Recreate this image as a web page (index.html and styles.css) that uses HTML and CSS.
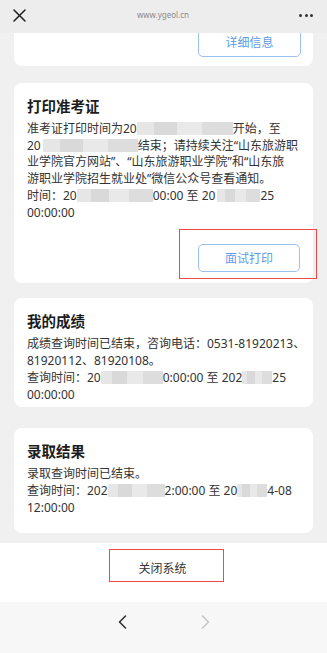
FILE: index.html
```html
<!DOCTYPE html>
<html lang="zh-CN">
<head>
<meta charset="utf-8">
<title>ygeol</title>
<link rel="stylesheet" href="styles.css">
</head>
<body>
<div class="page">
  <header class="topbar">
    <svg class="close" width="13" height="13" viewBox="0 0 13 13"><path d="M1 1L12 12M12 1L1 12" stroke="#1f1f1f" stroke-width="1.5" stroke-linecap="round"/></svg>
    <div class="url">www.ygeol.cn</div>
    <div class="dots"><i></i><i></i><i></i></div>
  </header>
  <main class="content">
    <section class="card card-top">
      <button class="btn btn-detail">详细信息</button>
    </section>
    <section class="card card-print">
      <h2 class="title">打印准考证</h2>
      <div class="text text-print">
        <div class="line">准考证打印时间为20<span class="mask m-a"></span>开始，至</div>
        <div class="line">20<span class="mask m-b"></span>结束；请持续关注“山东旅游职</div>
        <div class="line">业学院官方网站”、“山东旅游职业学院”和“山东旅</div>
        <div class="line">游职业学院招生就业处”微信公众号查看通知。</div>
        <div class="line">时间：20<span class="mask m-c"></span>00:00 至 20<span class="mask m-d"></span>25</div>
        <div class="line">00:00:00</div>
      </div>
      <div class="mark">
        <button class="btn btn-print">面试打印</button>
      </div>
    </section>
    <section class="card card-score">
      <h2 class="title">我的成绩</h2>
      <div class="text text-score">
        <div class="line">成绩查询时间已结束，咨询电话：0531-81920213、</div>
        <div class="line">81920112、81920108。</div>
        <div class="line">查询时间：20<span class="mask m-e"></span>0:00:00 至 202<span class="mask m-f"></span>25</div>
        <div class="line">00:00:00</div>
      </div>
    </section>
    <section class="card card-admit">
      <h2 class="title">录取结果</h2>
      <div class="text text-admit">
        <div class="line">录取查询时间已结束。</div>
        <div class="line">查询时间：202<span class="mask m-g"></span>2:00:00 至 20<span class="mask m-h"></span>4-08</div>
        <div class="line">12:00:00</div>
      </div>
    </section>
  </main>
  <div class="footer">
    <div class="close-sys">关闭系统</div>
  </div>
  <nav class="bottombar">
    <svg width="9" height="14" viewBox="0 0 9 14"><path d="M7.5 1L1.5 7L7.5 13" fill="none" stroke="#2b2b2b" stroke-width="1.5" stroke-linecap="round" stroke-linejoin="round"/></svg>
    <svg width="9" height="14" viewBox="0 0 9 14"><path d="M1.5 1L7.5 7L1.5 13" fill="none" stroke="#c4c4c4" stroke-width="1.5" stroke-linecap="round" stroke-linejoin="round"/></svg>
  </nav>
</div>
</body>
</html>
```
FILE: styles.css
```css
html, body {
  margin: 0;
  padding: 0;
}
body {
  width: 327px;
  height: 653px;
  overflow: hidden;
  font-family: "Noto Sans", "Noto Sans CJK SC", sans-serif;
  color: #333;
}
.page {
  display: flex;
  flex-direction: column;
  width: 327px;
  height: 653px;
}
.topbar {
  height: 33px;
  flex-shrink: 0;
  box-sizing: border-box;
  background: #ededed;
  display: grid;
  grid-template-columns: 1fr auto 1fr;
  align-items: start;
  padding: 0 14px 0 13px;
}
.close {
  margin-top: 9px;
}
.url {
  margin-top: 10px;
  font-size: 8px;
  line-height: 10px;
  color: #8a8a8a;
}
.dots {
  justify-self: end;
  display: flex;
  gap: 2.5px;
  margin-top: 14px;
}
.dots i {
  display: block;
  width: 3px;
  height: 3px;
  border-radius: 50%;
  background: #333;
}
.content {
  height: 510px;
  flex-shrink: 0;
  box-sizing: border-box;
  overflow: hidden;
  background: #f0f0f0;
  padding: 0 14px;
  display: flex;
  flex-direction: column;
}
.card {
  flex-shrink: 0;
  background: #fff;
  border-radius: 8px;
  box-sizing: border-box;
}
.card-top {
  margin-top: -6px;
  padding: 0 12px 9px;
  display: flex;
  justify-content: flex-end;
}
.btn {
  display: block;
  box-sizing: border-box;
  border: 1px solid #9cc1f0;
  border-radius: 5px;
  background: #fff;
  color: #5e9ce8;
  font-family: "Noto Sans", "Noto Sans CJK SC", sans-serif;
  font-size: 12px;
  padding: 0;
  margin: 0;
}
.btn-detail {
  width: 103px;
  height: 30px;
}
.btn-print {
  width: 102px;
  height: 28px;
}
.card-print {
  margin-top: 17px;
  padding: 13px 13px 4px;
  display: flex;
  flex-direction: column;
}
.title {
  margin: 0;
  font-size: 14.5px;
  line-height: 20px;
  font-weight: 700;
  color: #1c1c1c;
}
.text {
  font-size: 12px;
  color: #333;
}
.text-print {
  margin-top: 5px;
  line-height: 16.7px;
}
.text-score {
  margin-top: 4px;
  line-height: 17px;
}
.text-admit {
  margin-top: 5px;
  line-height: 16.7px;
}
.line {
  white-space: nowrap;
}
.mask {
  display: inline-block;
  height: 13px;
  vertical-align: -2px;
  background: linear-gradient(90deg, #e6e6e6 0 18%, #d9d9d9 18% 42%, #e9e9e9 42% 68%, #dddddd 68% 100%);
}
.m-a { width: 96px; }
.m-b { width: 95px; margin-left: 2px; }
.m-c { width: 76px; }
.m-d { width: 43px; margin-left: 2px; }
.m-e { width: 62px; }
.m-f { width: 30px; }
.m-g { width: 57px; }
.m-h { width: 30px; }
.mark {
  align-self: flex-end;
  margin: 8px -17px 0 0;
  border: 1px solid #f04848;
  padding: 14px 16px 6px 18px;
}
.card-score {
  margin-top: 15px;
  padding: 13px 13px 4px;
}
.card-admit {
  margin-top: 21px;
  padding: 13px 13px 17px;
}
.footer {
  height: 59px;
  flex-shrink: 0;
  background: #fff;
  display: flex;
  justify-content: center;
  align-items: flex-start;
}
.close-sys {
  margin-top: 6px;
  margin-left: 6px;
  box-sizing: border-box;
  height: 33px;
  border: 1px solid #f04848;
  padding: 10px 36px 4px 28px;
  font-size: 12px;
  line-height: 17px;
  color: #333;
}
.bottombar {
  flex: 1;
  background: #f7f7f7;
  display: flex;
  justify-content: center;
  align-items: flex-start;
  gap: 74px;
  padding-top: 13px;
  box-sizing: border-box;
}
```
